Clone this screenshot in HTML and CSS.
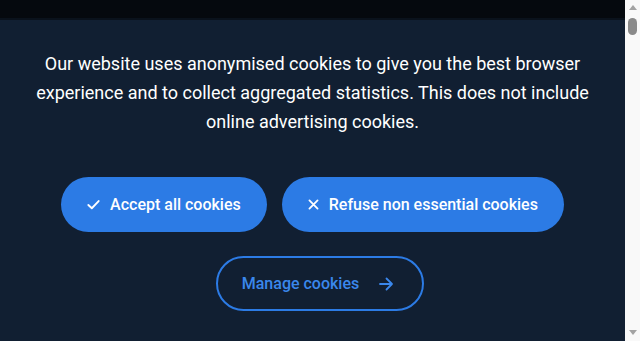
FILE: index.html
```html
<!DOCTYPE html>
<html lang="en">
<head>
  <meta charset="UTF-8">
  <meta name="viewport" content="width=device-width, initial-scale=1.0">
  <title>Cookie banner</title>
  <link rel="stylesheet" href="styles.css">
</head>
<body>

<div class="page">
  <!-- Site header strip -->
  <div class="topbar"></div>

  <!-- Cookie consent banner -->
  <div class="cookie-banner">
    <p class="cookie-text">
      Our website uses anonymised cookies to give you the best browser experience and to collect aggregated statistics. This does not include online advertising cookies.
    </p>

    <div class="cookie-row">
      <button class="cookie-btn filled">
        <svg class="icon" viewBox="0 0 16 16" width="15" height="15"><path d="M2.5 8.5 L6.2 12 L13.5 4.3" fill="none" stroke="currentColor" stroke-width="2" stroke-linecap="round" stroke-linejoin="round"/></svg>
        <span>Accept all cookies</span>
      </button>
      <button class="cookie-btn filled">
        <svg class="icon" viewBox="0 0 16 16" width="13" height="13"><path d="M3 3 L13 13 M13 3 L3 13" fill="none" stroke="currentColor" stroke-width="2.2" stroke-linecap="round"/></svg>
        <span>Refuse non essential cookies</span>
      </button>
    </div>

    <div class="cookie-row manage-row">
      <button class="cookie-btn outline">
        <span>Manage cookies</span>
        <svg class="icon arrow" viewBox="0 0 16 16" width="16" height="16"><path d="M2 8 H14 M8.5 2.5 L14 8 L8.5 13.5" fill="none" stroke="currentColor" stroke-width="1.8" stroke-linecap="round" stroke-linejoin="round"/></svg>
      </button>
    </div>
  </div>
</div>

<!-- Browser scrollbar rail -->
<div class="scroll-rail">
  <div class="rail-top">
    <span class="arrow-up"></span>
    <span class="thumb"></span>
  </div>
  <span class="arrow-down"></span>
</div>

</body>
</html>
```

FILE: styles.css
```css
/* General reset */
* {
  margin: 0;
  padding: 0;
  box-sizing: border-box;
}

body {
  font-family: Roboto, "Liberation Sans", Arial, sans-serif;
  background-color: #111f32;
  color: #fff;
  min-height: 100vh;
  display: flex;
  overflow: hidden;
}

.page {
  flex: 1;
}

/* Dark strip at the top */
.topbar {
  height: 20px;
  background-color: #05090e;
  border-bottom: 2px solid #0a121c;
}

/* Banner content */
.cookie-banner {
  display: flex;
  flex-direction: column;
  align-items: center;
  padding-top: 29px;
}

.cookie-text {
  max-width: 570px;
  text-align: center;
  font-size: 18px;
  line-height: 29px;
  margin-bottom: 41px;
}

.cookie-row {
  display: flex;
  justify-content: center;
  gap: 15px;
  margin-bottom: 24px;
}

/* Manage row sits a little right of centre */
.manage-row {
  padding-left: 15px;
}

/* Buttons */
.cookie-btn {
  display: flex;
  align-items: center;
  gap: 9px;
  height: 55px;
  padding: 0 26px 0 25px;
  border-radius: 28px;
  font-family: inherit;
  font-size: 16px;
  font-weight: 500;
  cursor: pointer;
}

.cookie-btn.filled {
  background-color: #2c7be5;
  border: none;
  color: #fff;
}

.cookie-btn.outline {
  background-color: transparent;
  border: 2px solid #2c7be5;
  color: #3a87ec;
  padding: 0 28px 0 24px;
  gap: 19px;
}

.icon {
  flex-shrink: 0;
}

/* Scrollbar rail on the right */
.scroll-rail {
  width: 15px;
  background-color: #f9f9f9;
  display: flex;
  flex-direction: column;
  justify-content: space-between;
  align-items: center;
  padding: 5px 0 6px;
}

.rail-top {
  display: flex;
  flex-direction: column;
  align-items: center;
  gap: 8px;
}

.arrow-up,
.arrow-down {
  width: 0;
  height: 0;
  border-left: 4px solid transparent;
  border-right: 4px solid transparent;
}

.arrow-up {
  border-bottom: 5px solid #a3a3a3;
}

.arrow-down {
  border-top: 5px solid #a3a3a3;
}

.thumb {
  width: 9px;
  height: 17px;
  border-radius: 5px;
  background-color: #8a8a8a;
}
```
